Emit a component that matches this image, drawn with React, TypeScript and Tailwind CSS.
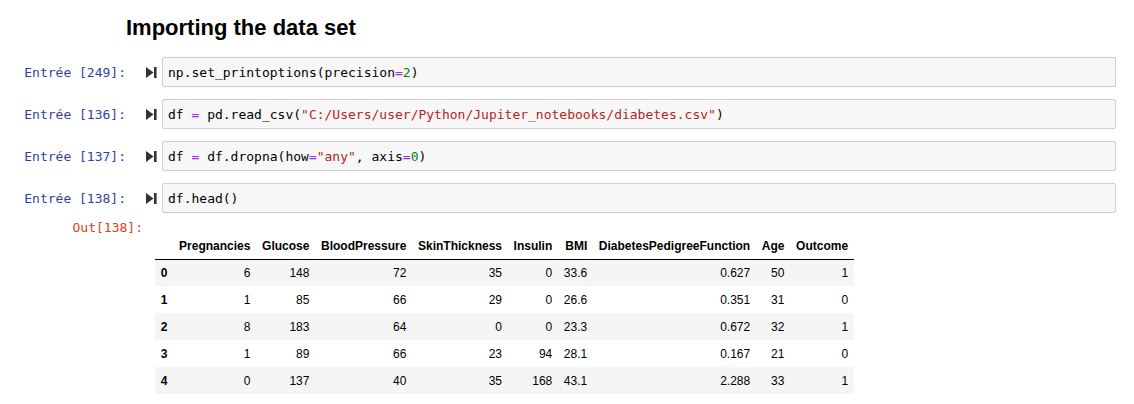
import React from "react";

const mono = "font-['DejaVu_Sans_Mono',monospace]";

function RunIcon() {
  return (
    <svg width="11" height="11" viewBox="0 0 11 11" className="block">
      <polygon points="0,0 7.6,5.5 0,11" fill="#333" />
      <rect x="8" y="0" width="2.6" height="11" fill="#333" />
    </svg>
  );
}

const Op = ({ children }: { children: React.ReactNode }) => (
  <span className="text-[#AA22FF]">{children}</span>
);
const Num = ({ children }: { children: React.ReactNode }) => (
  <span className="text-[#008800]">{children}</span>
);
const Str = ({ children }: { children: React.ReactNode }) => (
  <span className="text-[#BA2121]">{children}</span>
);

function Cell({ n, children }: { n: string; children: React.ReactNode }) {
  return (
    <div className="flex items-center h-[30px]">
      <div
        className={`${mono} w-[126px] text-right text-[13px] leading-[17px] text-[#303F9F] whitespace-pre`}
      >
        {`Entrée [${n}]:`}
      </div>
      <div className="w-[36px] flex justify-start pl-[20px]">
        <RunIcon />
      </div>
      <div
        className={`${mono} w-[954px] h-[30px] flex items-center px-[5px] bg-[#f7f7f7] border border-[#cfcfcf] rounded-[2px] text-[13px] leading-[17px] text-black whitespace-pre`}
      >
        {children}
      </div>
    </div>
  );
}

const cols = [
  "Pregnancies",
  "Glucose",
  "BloodPressure",
  "SkinThickness",
  "Insulin",
  "BMI",
  "DiabetesPedigreeFunction",
  "Age",
  "Outcome",
];

const rows = [
  ["6", "148", "72", "35", "0", "33.6", "0.627", "50", "1"],
  ["1", "85", "66", "29", "0", "26.6", "0.351", "31", "0"],
  ["8", "183", "64", "0", "0", "23.3", "0.672", "32", "1"],
  ["1", "89", "66", "23", "94", "28.1", "0.167", "21", "0"],
  ["0", "137", "40", "35", "168", "43.1", "2.288", "33", "1"],
];

export default function App() {
  return (
    <div className="w-[1134px] h-[404px] bg-white overflow-hidden">
      <h2 className="pl-[126px] pt-[15px] font-['Liberation_Sans',Arial,sans-serif] text-[22px] font-bold leading-[26px] text-black">
        Importing the data set
      </h2>
      <div className="mt-[16px] flex flex-col gap-[12px]">
        <Cell n="249">
          np.set_printoptions(precision<Op>=</Op>
          <Num>2</Num>)
        </Cell>
        <Cell n="136">
          df <Op>=</Op> pd.read_csv(
          <Str>"C:/Users/user/Python/Jupiter_notebooks/diabetes.csv"</Str>)
        </Cell>
        <Cell n="137">
          df <Op>=</Op> df.dropna(how<Op>=</Op>
          <Str>"any"</Str>, axis<Op>=</Op>
          <Num>0</Num>)
        </Cell>
        <Cell n="138">df.head()</Cell>
      </div>
      <div className="flex items-start">
        <div
          className={`${mono} w-[143px] mt-[6px] text-right text-[13px] leading-[17px] text-[#D84315] whitespace-pre`}
        >
          Out[138]:
        </div>
        <table className="ml-[12px] mt-[20px] font-['Liberation_Sans',Arial,sans-serif] text-[12px] text-black">
          <thead>
            <tr className="border-b border-black">
              <th className="h-[26px] px-[5.8px]"></th>
              {cols.map((c) => (
                <th key={c} className="h-[26px] px-[5.8px] text-right font-bold">
                  {c}
                </th>
              ))}
            </tr>
          </thead>
          <tbody>
            {rows.map((r, i) => (
              <tr key={i} className={i % 2 === 0 ? "bg-[#f5f5f5]" : "bg-white"}>
                <th className="h-[27px] px-[5.8px] text-left font-bold">{i}</th>
                {r.map((v, j) => (
                  <td key={j} className="h-[27px] px-[5.8px] text-right font-normal">
                    {v}
                  </td>
                ))}
              </tr>
            ))}
          </tbody>
        </table>
      </div>
    </div>
  );
}
